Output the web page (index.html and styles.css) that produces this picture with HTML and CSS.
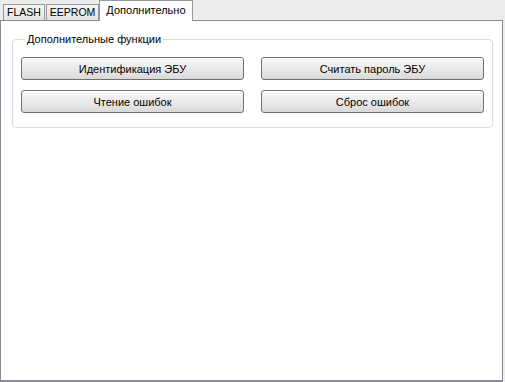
FILE: index.html
```html
<!DOCTYPE html>
<html lang="ru">
<head>
    <meta charset="UTF-8">
    <title>Дополнительно</title>
    <link rel="stylesheet" href="styles.css">
</head>
<body>
    <div class="tabs">
        <div class="tab-bar">
            <div class="tab">FLASH</div>
            <div class="tab">EEPROM</div>
            <div class="tab active">Дополнительно</div>
        </div>
        <div class="tab-pane">
            <fieldset class="group">
                <legend>Дополнительные функции</legend>
                <div class="btn-grid">
                    <button class="btn">Идентификация ЭБУ</button>
                    <button class="btn">Считать пароль ЭБУ</button>
                    <button class="btn">Чтение ошибок</button>
                    <button class="btn">Сброс ошибок</button>
                </div>
            </fieldset>
        </div>
    </div>
</body>
</html>
```

FILE: styles.css
```css
* {
    margin: 0;
    padding: 0;
    box-sizing: border-box;
}

body {
    width: 505px;
    height: 382px;
    background: #ececec;
    font-family: 'Liberation Sans', Arial, sans-serif;
    font-size: 11px;
    color: #000;
    overflow: hidden;
}

.tabs {
    display: flex;
    flex-direction: column;
    width: 503px;
    height: 382px;
}

.tab-bar {
    display: flex;
    align-items: flex-end;
    height: 20px;
    padding-left: 3px;
}

.tab {
    height: 16px;
    padding: 0 3px;
    font-size: 10.5px;
    line-height: 15px;
    border: 1px solid #919b9c;
    border-bottom: none;
    background: linear-gradient(#f6f6f6, #e4e4e4);
    margin-right: 1px;
}

.tab.active {
    height: 21px;
    padding: 0 6px;
    margin-left: -1px;
    font-size: 11px;
    line-height: 18px;
    background: #fff;
    margin-bottom: -1px;
    position: relative;
    z-index: 1;
}

.tab-pane {
    flex: 1;
    background: #fff;
    border: 1px solid #898c95;
    border-bottom-width: 2px;
    padding: 12px 10px 0 11px;
}

.group {
    border: 1px solid #d9dde3;
    border-radius: 4px;
    padding: 12px 8px 14px 8px;
}

.group legend {
    margin-left: 4px;
    padding: 0 2px;
}

.btn-grid {
    display: grid;
    grid-template-columns: 223px 223px;
    column-gap: 17px;
    row-gap: 10px;
}

.btn {
    height: 23px;
    font: inherit;
    color: #000;
    border: 1px solid #707070;
    border-radius: 3px;
    background: linear-gradient(#f7f7f7, #ececec 45%, #d9d9d9);
    box-shadow: inset 0 1px 0 #fff;
}
```
